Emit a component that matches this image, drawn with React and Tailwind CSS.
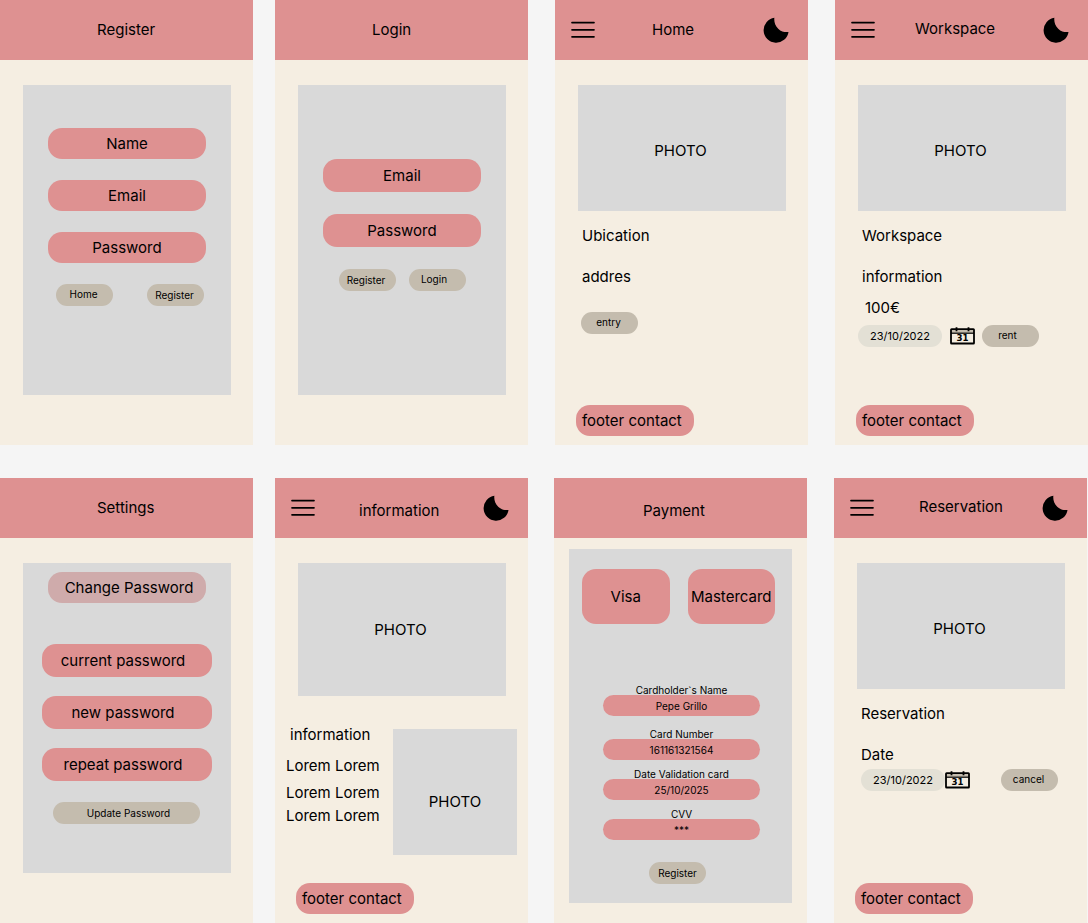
import React from "react";
import clsx from "clsx";

function MenuIcon() {
  return (
    <svg width="24" height="18" viewBox="0 0 24 18" fill="none" stroke="#000" strokeWidth="1.7" strokeLinecap="round">
      <path d="M1 1.6h22M1 8.8h22M1 15.8h22" />
    </svg>
  );
}

function MoonIcon() {
  return (
    <svg width="26" height="26" viewBox="0 0 26 26">
      <path d="M11.4 0.8A12.5 12.5 0 1 0 25.5 14.9C22.8 15.4 18.6 15.1 15.2 11.7C11.8 8.3 10.9 4 11.4 0.8Z" fill="#000" />
    </svg>
  );
}

function CalendarIcon() {
  return (
    <svg width="25" height="18" viewBox="0 0 25 18">
      <rect x="1" y="2.2" width="23" height="4" fill="#c4bcae" />
      <rect x="1" y="2.2" width="23" height="14.3" rx="0.6" fill="none" stroke="#000" strokeWidth="1.8" />
      <path d="M1 6.2h23" stroke="#000" strokeWidth="1.2" />
      <path d="M6.5 0.2v4M18.5 0.2v4" stroke="#000" strokeWidth="1.8" />
      <text x="12.5" y="14.3" textAnchor="middle" fontFamily="DejaVu Sans, sans-serif" fontSize="8.6" fontWeight="700">
        31
      </text>
    </svg>
  );
}

function Screen({ title, nav, titleClass, gapClass, children }) {
  return (
    <section className={clsx("flex min-h-[445px] min-w-0 flex-1 flex-col bg-[#f5eee2]", gapClass)}>
      <header className={clsx("flex h-[60px] items-center bg-[#de9191]", nav && "pl-4 pr-[19px]")}>
        {nav && (
          <button type="button" aria-label="Menu">
            <MenuIcon />
          </button>
        )}
        <h1 className={titleClass}>{title}</h1>
        {nav && (
          <button type="button" aria-label="Dark mode" className="ml-auto">
            <MoonIcon />
          </button>
        )}
      </header>
      {children}
    </section>
  );
}

function Field({ label, type = "text", className }) {
  return (
    <input
      type={type}
      aria-label={label}
      placeholder={label}
      className={clsx("w-full rounded-[14px] bg-[#de9191] text-center placeholder:text-black placeholder:opacity-100", className)}
    />
  );
}

function Pill({ className = "h-[22px] w-[57px] pb-[3px] pr-[2px]", children }) {
  return (
    <button type="button" className={clsx("flex shrink-0 items-center justify-center rounded-full bg-[#c4bcae] text-[10px] leading-4", className)}>
      {children}
    </button>
  );
}

function Photo({ className }) {
  return <div className={clsx("flex items-center justify-center bg-[#d9d9d9]", className)}>PHOTO</div>;
}

function FooterContact() {
  return (
    <footer className="mt-auto px-[21px] pb-[9px]">
      <a href="#contact" className="flex h-[31px] w-[118px] items-center rounded-[14px] bg-[#de9191] pl-[6px] whitespace-nowrap">
        footer contact
      </a>
    </footer>
  );
}

function DatePicker() {
  return (
    <input
      type="text"
      aria-label="Date"
      defaultValue="23/10/2022"
      className="h-[22px] w-[84px] shrink-0 rounded-full bg-[#e3e0d5] text-center text-[11px]"
    />
  );
}

function CardField({ id, label, value, type = "text", className }) {
  return (
    <div className={clsx("flex flex-col", className)}>
      <label htmlFor={id} className="text-center text-[10px] leading-[10px]">
        {label}
      </label>
      <input id={id} type={type} defaultValue={value} className="h-[21px] w-full rounded-full bg-[#de9191] text-center text-[10px]" />
    </div>
  );
}

export default function App() {
  return (
    <main className="flex min-h-screen flex-col gap-[33px] bg-[#f5f5f5] font-['Inter',sans-serif] text-[15px] leading-6 text-black">
      <div className="flex">
        <Screen title="Register" titleClass="pl-[97px]">
          <form className="ml-[23px] mr-[22px] mt-[25px] flex h-[310px] flex-col bg-[#d9d9d9] px-[25px] pt-[43px]">
            <div className="flex flex-col gap-[21px]">
              <Field label="Name" className="h-[31px]" />
              <Field label="Email" type="email" className="h-[31px]" />
              <Field label="Password" type="password" className="h-[31px]" />
            </div>
            <div className="mt-[21px] flex justify-between pl-2 pr-[2px]">
              <Pill>Home</Pill>
              <Pill className="h-[22px] w-[57px] pr-[2px]">Register</Pill>
            </div>
          </form>
        </Screen>

        <Screen title="Login" titleClass="pl-[97px]" gapClass="ml-[22px]">
          <form className="ml-[23px] mr-[22px] mt-[25px] flex h-[310px] flex-col bg-[#d9d9d9] px-[25px] pt-[74px]">
            <div className="flex flex-col gap-[22px]">
              <Field label="Email" type="email" className="h-[33px]" />
              <Field label="Password" type="password" className="h-[33px]" />
            </div>
            <div className="mt-[22px] flex justify-center gap-[13px]">
              <Pill className="h-[22px] w-[57px] pr-[2px]">Register</Pill>
              <Pill className="h-[22px] w-[57px] pb-[3px] pr-[6px]">Login</Pill>
            </div>
          </form>
        </Screen>

        <Screen title="Home" nav titleClass="pl-[57px]" gapClass="ml-[27px]">
          <Photo className="ml-[23px] mr-[22px] mt-[25px] h-[126px] pt-[6px] pr-[3px]" />
          <div className="mt-[13px] flex flex-col gap-[17px] px-[27px]">
            <p>Ubication</p>
            <p>addres</p>
          </div>
          <div className="mt-[23px] px-[26px]">
            <Pill>entry</Pill>
          </div>
          <FooterContact />
        </Screen>

        <Screen title="Workspace" nav titleClass="pl-10 pb-[3px]" gapClass="ml-[27px]">
          <Photo className="ml-[23px] mr-[22px] mt-[25px] h-[126px] pt-[6px] pr-[3px]" />
          <div className="mt-[13px] flex flex-col gap-[17px] px-[27px]">
            <p>Workspace</p>
            <p>information</p>
          </div>
          <p className="mt-[7px] px-[30px]">100€</p>
          <div className="mt-[5px] flex items-center px-[23px]">
            <DatePicker />
            <button type="button" aria-label="Open calendar" className="ml-2 mr-[7px]">
              <CalendarIcon />
            </button>
            <Pill className="h-[22px] w-[57px] pb-[3px] pr-[6px]">rent</Pill>
          </div>
          <FooterContact />
        </Screen>
      </div>

      <div className="flex pr-px">
        <Screen title="Settings" titleClass="pl-[97px]">
          <form className="ml-[23px] mr-[22px] mt-[25px] flex h-[310px] flex-col bg-[#d9d9d9] px-[19px] pt-[9px]">
            <h2 className="mx-[6px] flex h-[31px] items-center justify-center rounded-[14px] bg-[#cfabab] pl-1 whitespace-nowrap">
              Change Password
            </h2>
            <div className="mt-[41px] flex flex-col gap-[19px]">
              <Field label="current password" type="password" className="h-[33px] pr-2" />
              <Field label="new password" type="password" className="h-[33px] pr-2" />
              <Field label="repeat password" type="password" className="h-[33px] pr-2" />
            </div>
            <Pill className="ml-[11px] mr-3 mt-[21px] h-[22px] pb-px pl-1">Update Password</Pill>
          </form>
        </Screen>

        <Screen title="information" nav titleClass="pl-11 pt-[5px]" gapClass="ml-[22px]">
          <Photo className="ml-[23px] mr-[22px] mt-[25px] h-[133px] pr-[3px]" />
          <div className="mt-[27px] flex justify-between px-[11px]">
            <div className="flex flex-col whitespace-nowrap">
              <h2 className="pl-1">information</h2>
              <p className="mt-[7px]">Lorem Lorem</p>
              <p className="mt-[3px]">Lorem Lorem</p>
              <p className="-mt-px">Lorem Lorem</p>
            </div>
            <Photo className="mt-[6px] h-[126px] w-[124px] pt-5" />
          </div>
          <FooterContact />
        </Screen>

        <Screen title="Payment" titleClass="pl-[89px] pt-[5px]" gapClass="ml-[26px]">
          <form className="mx-[15px] mt-[11px] flex h-[354px] flex-col bg-[#d9d9d9] pt-5">
            <div className="flex gap-[18px] pl-[13px] pr-[17px]">
              <button type="button" className="h-[55px] min-w-0 flex-1 rounded-[14px] bg-[#de9191]">
                Visa
              </button>
              <button type="button" className="h-[55px] min-w-0 flex-1 rounded-[14px] bg-[#de9191]">
                Mastercard
              </button>
            </div>
            <div className="mt-[61px] flex flex-col gap-[9px] pl-[34px] pr-8">
              <CardField id="holder" label="Cardholder`s Name" value="Pepe Grillo" className="pb-1" />
              <CardField id="number" label="Card Number" value="161161321564" />
              <CardField id="date" label="Date Validation card" value="25/10/2025" />
              <CardField id="cvv" label="CVV" value="***" />
            </div>
            <div className="mt-[22px] flex justify-center pr-[6px]">
              <Pill className="h-[22px] w-[57px]">Register</Pill>
            </div>
          </form>
        </Screen>

        <Screen title="Reservation" nav titleClass="pl-[45px] pb-[3px]" gapClass="ml-[27px]">
          <Photo className="ml-[23px] mr-[22px] mt-[25px] h-[126px] pt-[6px] pr-[3px]" />
          <div className="mt-[13px] flex flex-col gap-[17px] px-[27px]">
            <p>Reservation</p>
            <p>Date</p>
          </div>
          <div className="mt-[2px] flex items-center pl-[27px] pr-[29px]">
            <DatePicker />
            <button type="button" aria-label="Open calendar" className="mr-auto">
              <CalendarIcon />
            </button>
            <Pill>cancel</Pill>
          </div>
          <FooterContact />
        </Screen>
      </div>
    </main>
  );
}
